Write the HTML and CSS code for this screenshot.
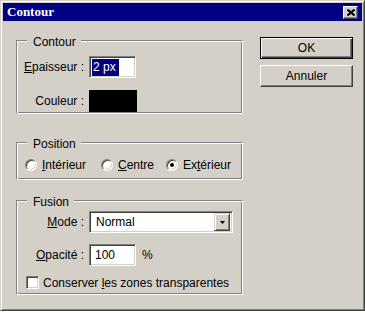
FILE: index.html
```html
<!DOCTYPE html>
<html lang="fr">
<head>
  <meta charset="UTF-8">
  <title>Contour</title>
  <link rel="stylesheet" href="styles.css">
</head>
<body>
  <div class="window">
    <div class="titlebar">
      <span class="title">Contour</span>
      <span class="close">
        <svg width="8" height="7" viewBox="0 0 8 7"><path d="M0.5 0.5 L7.5 6.5 M7.5 0.5 L0.5 6.5" stroke="#000" stroke-width="2"/></svg>
      </span>
    </div>
    <div class="content">
      <div class="groups">
        <div class="group group-contour">
          <span class="legend">Contour</span>
          <div class="row">
            <span class="label"><u>E</u>paisseur :</span>
            <div class="edit edit-small"><span class="sel">2 px</span></div>
          </div>
          <div class="row row-gap">
            <span class="label">Couleur :</span>
            <div class="swatch"></div>
          </div>
        </div>

        <div class="group group-position">
          <span class="legend">Position</span>
          <div class="radios">
            <span class="radio-item"><span class="radio"></span><span><u>I</u>ntérieur</span></span>
            <span class="radio-item"><span class="radio"></span><span><u>C</u>entre</span></span>
            <span class="radio-item"><span class="radio checked"></span><span>Ex<u>t</u>érieur</span></span>
          </div>
        </div>

        <div class="group group-fusion">
          <span class="legend">Fusion</span>
          <div class="row">
            <span class="label"><u>M</u>ode :</span>
            <div class="combo">
              <span class="combo-text">Normal</span>
              <span class="combo-btn">
                <svg width="5" height="3" viewBox="0 0 5 3"><polygon points="0,0 5,0 2.5,3" fill="#000"/></svg>
              </span>
            </div>
          </div>
          <div class="row row-gap-2">
            <span class="label"><u>O</u>pacité :</span>
            <div class="edit edit-small"><span>100</span></div>
            <span class="unit">%</span>
          </div>
          <div class="check-row">
            <span class="check"></span>
            <span>Conserver <u>l</u>es zones transparentes</span>
          </div>
        </div>
      </div>

      <div class="buttons">
        <button class="btn btn-default">OK</button>
        <button class="btn">Annuler</button>
      </div>
    </div>
  </div>
</body>
</html>
```

FILE: styles.css
```css
body {
  margin: 0;
  background: #fff;
  font-family: "Liberation Sans", Arial, sans-serif;
  font-size: 12px;
  color: #000;
}

.window {
  width: 365px;
  height: 311px;
  box-sizing: border-box;
  padding: 2px;
  background: #d4d0c8;
  border: 1px solid;
  border-color: #d4d0c8 #404040 #404040 #d4d0c8;
  box-shadow: inset 1px 1px 0 #fff, inset -1px -1px 0 #808080;
}

.titlebar {
  height: 18px;
  display: flex;
  align-items: center;
  justify-content: space-between;
  padding: 0 4px;
  background: #000080;
  color: #fff;
}

.title {
  font-family: "Liberation Serif", "Times New Roman", serif;
  font-weight: bold;
  font-size: 13px;
}

.close {
  width: 15px;
  height: 13px;
  box-sizing: border-box;
  display: flex;
  align-items: center;
  justify-content: center;
  background: #d4d0c8;
  border: 1px solid;
  border-color: #fff #404040 #404040 #fff;
  box-shadow: inset -1px -1px 0 #808080;
}

.content {
  display: flex;
  align-items: flex-start;
  padding-left: 13px;
}

.groups {
  width: 227px;
  margin-top: 19px;
  display: flex;
  flex-direction: column;
}

.group {
  position: relative;
  box-sizing: border-box;
  border: 1px solid;
  border-color: #808080 #fff #fff #808080;
  box-shadow: inset 1px 1px 0 #fff, inset -1px -1px 0 #808080;
}

.legend {
  position: absolute;
  top: -6px;
  left: 10px;
  padding: 0 5px 0 6px;
  line-height: 14px;
  background: #d4d0c8;
}

.group-contour {
  height: 74px;
  padding-top: 15px;
}

.group-position {
  height: 38px;
  margin-top: 28px;
  padding: 14px 0 0 8px;
}

.group-fusion {
  height: 95px;
  margin-top: 20px;
  padding-top: 10px;
}

.row {
  display: flex;
  align-items: center;
}

.row-gap {
  margin-top: 12px;
}

.row-gap-2 {
  margin-top: 11px;
}

.label {
  width: 67px;
  margin-right: 5px;
  text-align: right;
  white-space: nowrap;
}

.edit {
  height: 22px;
  box-sizing: border-box;
  display: flex;
  align-items: center;
  padding: 0 4px 0 5px;
  background: #fff;
  border: 1px solid;
  border-color: #808080 #fff #fff #808080;
  box-shadow: inset 1px 1px 0 #404040, inset -1px -1px 0 #d4d0c8;
}

.edit-small {
  width: 47px;
}

.group-contour .edit {
  padding-left: 2px;
}

.sel {
  background: #000080;
  color: #fff;
  line-height: 17px;
  padding: 0 3px 0 1px;
}

.swatch {
  width: 48px;
  height: 22px;
  background: #000;
}

.unit {
  margin-left: 6px;
}

.radios {
  display: grid;
  grid-template-columns: 76px 65px auto;
  line-height: 16px;
}

.radio-item {
  display: flex;
  align-items: center;
  gap: 5px;
}

.radio {
  width: 12px;
  height: 12px;
  box-sizing: border-box;
  display: flex;
  align-items: center;
  justify-content: center;
  border-radius: 50%;
  background: #fff;
  border: 1px solid;
  border-color: #808080 #fff #fff #808080;
  box-shadow: inset 1px 1px 0 #404040, inset -1px -1px 0 #d4d0c8;
}

.radio.checked::after {
  content: "";
  width: 4px;
  height: 4px;
  border-radius: 50%;
  background: #000;
}

.combo {
  width: 144px;
  height: 22px;
  box-sizing: border-box;
  display: flex;
  align-items: center;
  padding: 2px;
  background: #fff;
  border: 1px solid;
  border-color: #808080 #fff #fff #808080;
  box-shadow: inset 1px 1px 0 #404040, inset -1px -1px 0 #d4d0c8;
}

.combo-text {
  flex: 1;
  padding-left: 4px;
}

.combo-btn {
  width: 16px;
  height: 18px;
  box-sizing: border-box;
  display: flex;
  align-items: center;
  justify-content: center;
  background: #d4d0c8;
  border: 1px solid;
  border-color: #d4d0c8 #404040 #404040 #d4d0c8;
  box-shadow: inset 1px 1px 0 #fff, inset -1px -1px 0 #808080;
}

.check-row {
  display: flex;
  align-items: center;
  gap: 4px;
  height: 13px;
  margin-top: 10px;
  padding-left: 9px;
}

.check {
  width: 13px;
  height: 13px;
  box-sizing: border-box;
  background: #fff;
  border: 1px solid;
  border-color: #808080 #fff #fff #808080;
  box-shadow: inset 1px 1px 0 #404040, inset -1px -1px 0 #d4d0c8;
}

.buttons {
  width: 93px;
  margin: 16px 0 0 17px;
  display: flex;
  flex-direction: column;
  gap: 6px;
}

.btn {
  height: 22px;
  box-sizing: border-box;
  padding: 0;
  font: inherit;
  color: #000;
  background: #d4d0c8;
  border: 1px solid;
  border-color: #fff #404040 #404040 #fff;
  box-shadow: inset -1px -1px 0 #808080;
}

.btn-default {
  border-color: #000;
  box-shadow: inset 1px 1px 0 #fff, inset -1px -1px 0 #404040, inset -2px -2px 0 #808080;
}
```
